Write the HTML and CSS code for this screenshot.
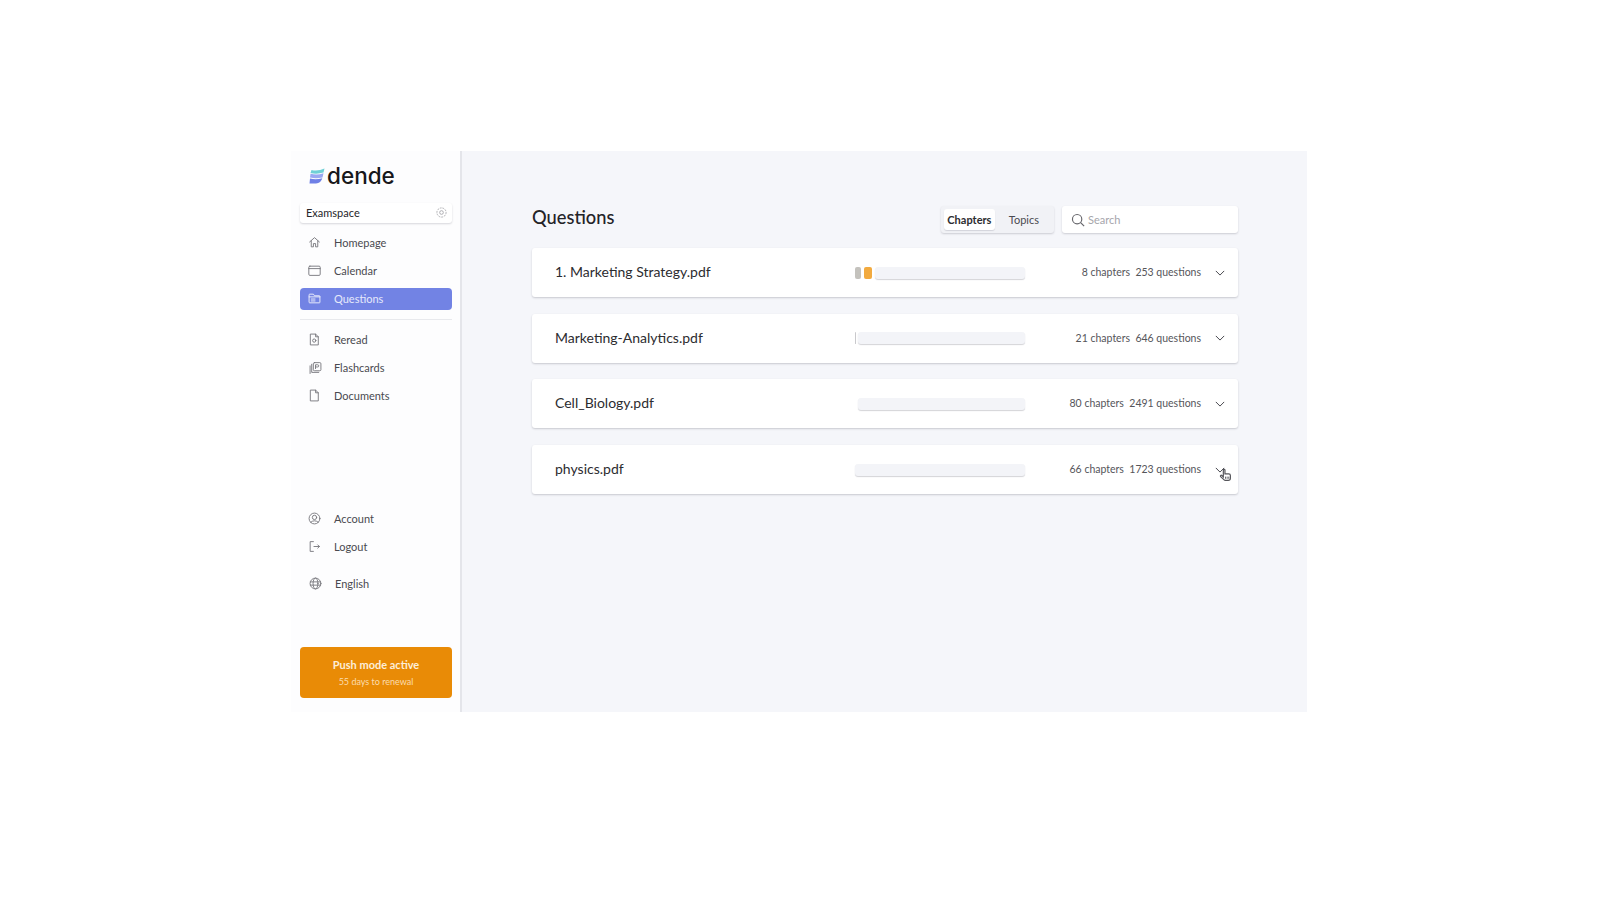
FILE: index.html
```html
<!DOCTYPE html>
<html lang="en">
<head>
    <meta charset="UTF-8">
    <meta name="viewport" content="width=device-width, initial-scale=1.0">
    <title>Questions</title>
    <link rel="stylesheet" href="styles.css">
</head>
<body>
    <div class="app">
        <aside class="sidebar">
            <div class="logo">
                <svg class="logo-mark" viewBox="0 0 16 16" width="16" height="16">
                    <path d="M2.500 2 Q9 3.500 15.500 0.500 L14.500 4.500 Q8 6.500 1.500 5 Z" fill="#6fd0d6"/>
                    <path d="M1.500 5.800 Q8 7.500 14.500 5.300 L13.500 9.500 Q7 11 1 9.500 Z" fill="#9aa8f2"/>
                    <path d="M1 10.500 Q7 12 13.300 10.200 Q12 15 7 15.500 L0.500 15.500 Z" fill="#6f80e6"/>
                </svg>
                <span class="logo-text">dende</span>
            </div>
            <div class="examspace">
                <span>Examspace</span>
                <svg viewBox="0 0 24 24" width="11" height="11" fill="none" stroke="#a9a9ad" stroke-width="2"><circle cx="12" cy="12" r="4"/><circle cx="12" cy="12" r="10" stroke-dasharray="4 2"/></svg>
            </div>
            <nav class="nav-group">
                <a class="nav-item">
                    <svg class="icon" viewBox="0 0 24 24"><path d="M3 11 12 3l9 8M6 9v11h4v-6h4v6h4V9"/></svg>
                    Homepage
                </a>
                <a class="nav-item">
                    <svg class="icon" viewBox="0 0 24 24"><rect x="1.500" y="4" width="21" height="17" rx="2"/><path d="M1.500 8.500h21"/></svg>
                    Calendar
                </a>
                <a class="nav-item active">
                    <svg class="icon" viewBox="0 0 24 24"><path d="M2 5a1 1 0 0 1 1-1h7l2 3h9a1 1 0 0 1 1 1v11a1 1 0 0 1-1 1H3a1 1 0 0 1-1-1z"/><path d="M2 9h20M6 13h7M6 16.500h7"/></svg>
                    Questions
                </a>
            </nav>
            <div class="nav-divider"></div>
            <nav class="nav-group">
                <a class="nav-item">
                    <svg class="icon" viewBox="0 0 24 24"><path d="M5 2h9l5 5v15H5z"/><path d="M14 2v5h5"/><circle cx="11.500" cy="14" r="3"/></svg>
                    Reread
                </a>
                <a class="nav-item">
                    <svg class="icon icon-shift" viewBox="0 0 24 24"><rect x="8" y="3" width="14" height="15" rx="2"/><path d="M5 6v15h13M2 9v14"/><path d="M12 14V7h4a2 2 0 0 1 0 4h-4"/></svg>
                    Flashcards
                </a>
                <a class="nav-item">
                    <svg class="icon" viewBox="0 0 24 24"><path d="M5 2h9l5 5v15H5z"/><path d="M14 2v5h5"/></svg>
                    Documents
                </a>
            </nav>
            <nav class="nav-group nav-bottom">
                <a class="nav-item">
                    <svg class="icon" viewBox="0 0 24 24"><circle cx="12" cy="12" r="10"/><circle cx="12" cy="10" r="4"/><path d="M5 19q7-6 14 0"/></svg>
                    Account
                </a>
                <a class="nav-item">
                    <svg class="icon" viewBox="0 0 24 24"><path d="M10 3H4v18h6M11 12h10M18 9l3 3-3 3"/></svg>
                    Logout
                </a>
                <a class="nav-item lang">
                    <svg class="icon" viewBox="0 0 24 24"><circle cx="12" cy="12" r="10"/><ellipse cx="12" cy="12" rx="4.500" ry="10"/><path d="M2.500 9h19M2.500 15h19"/></svg>
                    English
                </a>
            </nav>
            <div class="push-box">
                <p class="push-title">Push mode active</p>
                <p class="push-sub">55 days to renewal</p>
            </div>
        </aside>

        <main class="content">
            <div class="content-head">
                <h1 class="page-title">Questions</h1>
                <div class="tabs">
                    <span class="tab selected">Chapters</span>
                    <span class="tab">Topics</span>
                </div>
                <div class="search">
                    <svg viewBox="0 0 24 24" width="14" height="14" fill="none" stroke="#66666b" stroke-width="2"><circle cx="10.500" cy="10.500" r="8"/><path d="m16.500 16.500 6 6"/></svg>
                    <span>Search</span>
                </div>
            </div>

            <div class="doc-list">
                <div class="doc">
                    <span class="doc-name">1. Marketing Strategy.pdf</span>
                    <div class="bar bar-first">
                        <span class="seg seg-gray"></span>
                        <span class="seg seg-orange"></span>
                        <span class="track"></span>
                    </div>
                    <span class="doc-meta">8 chapters&nbsp; 253 questions</span>
                    <svg class="chevron" viewBox="0 0 12 7"><path d="M1 1l5 5 5-5"/></svg>
                </div>
                <div class="doc">
                    <span class="doc-name">Marketing-Analytics.pdf</span>
                    <div class="bar">
                        <span class="seg seg-tick"></span>
                        <span class="track"></span>
                    </div>
                    <span class="doc-meta">21 chapters&nbsp; 646 questions</span>
                    <svg class="chevron" viewBox="0 0 12 7"><path d="M1 1l5 5 5-5"/></svg>
                </div>
                <div class="doc">
                    <span class="doc-name">Cell_Biology.pdf</span>
                    <div class="bar bar-third">
                        <span class="track"></span>
                    </div>
                    <span class="doc-meta">80 chapters&nbsp; 2491 questions</span>
                    <svg class="chevron" viewBox="0 0 12 7"><path d="M1 1l5 5 5-5"/></svg>
                </div>
                <div class="doc">
                    <span class="doc-name">physics.pdf</span>
                    <div class="bar bar-fourth">
                        <span class="track"></span>
                    </div>
                    <span class="doc-meta">66 chapters&nbsp; 1723 questions</span>
                    <svg class="chevron" viewBox="0 0 12 7"><path d="M1 1l5 5 5-5"/></svg>
                    <svg class="cursor" viewBox="0 0 24 24" width="13" height="14"><path d="M8 3a1.500 1.500 0 0 1 3 0v7h7a3 3 0 0 1 3 3v5a4 4 0 0 1-4 4h-5a4 4 0 0 1-3-1.500L3 15a1.500 1.500 0 0 1 2.300-2L8 15.500z" fill="#fff" stroke="#55555a" stroke-width="2.200"/><path d="M12 15v4M15 15v4M18 15v4" stroke="#55555a" stroke-width="1.600"/></svg>
                </div>
            </div>
        </main>
    </div>
</body>
</html>
```

FILE: styles.css
```css
*{
    box-sizing: border-box;
}
body{
    margin: 0;
    height: 900px;
    overflow: hidden;
    background-color: #fff;
    font-family: Lato, 'Noto Sans', sans-serif;
    color: #2c2c30;
}
.app{
    display: flex;
    width: 1016px;
    height: 561px;
    margin: 151px 0 0 291px;
    background-color: #f5f6fa;
}
.sidebar{
    display: flex;
    flex-direction: column;
    width: 171px;
    padding: 0 8px 14px 9px;
    background-color: #fdfdfe;
    border-right: 2px solid #e4e5ea;
}
.logo{
    display: flex;
    align-items: center;
    gap: 2px;
    height: 52px;
    padding: 0 0 3px 9px;
}
.logo-text{
    font-family: Inter, Lato, sans-serif;
    font-size: 22.5px;
    font-weight: 500;
    line-height: 25px;
    color: #17171a;
}
.examspace{
    display: flex;
    justify-content: space-between;
    align-items: center;
    height: 20px;
    padding: 0 5px 2px 6px;
    background-color: #fff;
    border-radius: 3px;
    box-shadow: 0 1px 2px rgba(40, 40, 60, 0.18);
    font-size: 11px;
    color: #26262a;
}
.nav-group{
    display: flex;
    flex-direction: column;
    gap: 6px;
}
.sidebar > .nav-group:first-of-type{
    margin-top: 9px;
}
.nav-item{
    display: flex;
    align-items: center;
    gap: 13px;
    height: 22px;
    padding: 0 0 2px 8px;
    border-radius: 4px;
    font-size: 11px;
    color: #4a4a50;
}
.nav-item.active{
    background-color: #7283e4;
    color: #e6e9fb;
}
.icon{
    width: 13px;
    height: 13px;
    flex-shrink: 0;
    fill: none;
    stroke: #77777c;
    stroke-width: 1.700;
    stroke-linejoin: round;
    stroke-linecap: round;
}
.icon-shift{
    margin-left: 1px;
    margin-right: -1px;
}
.active .icon{
    stroke: #f0f2fd;
}
.nav-divider{
    height: 1px;
    margin: 9px 0 9px 0;
    background-color: #e8e9ed;
}
.nav-bottom{
    margin-top: auto;
}
.lang{
    margin-top: 9px;
    padding-left: 9px;
}
.push-box{
    display: flex;
    flex-direction: column;
    align-items: center;
    justify-content: center;
    gap: 5px;
    height: 51px;
    margin-top: 52px;
    background-color: #e98b06;
    border-radius: 4px;
    color: #fff;
}
.push-box p{
    margin: 0;
}
.push-title{
    font-size: 11px;
    font-weight: 700;
    color: #fdeed8;
}
.push-sub{
    font-size: 9px;
    color: #fbdcae;
}
.content{
    flex: 1;
    padding: 55px 69px 0 70px;
}
.content-head{
    display: flex;
    align-items: center;
    height: 27px;
    margin-bottom: 15px;
}
.page-title{
    flex: 1;
    margin: 0;
    padding-bottom: 5px;
    font-size: 18.3px;
    font-weight: 500;
    color: #232327;
}
.tabs{
    display: flex;
    align-items: center;
    width: 113px;
    height: 27px;
    padding: 0 3px;
    margin-right: 8px;
    background-color: #f1f2f6;
    border-radius: 3px;
    box-shadow: 0 1px 2px rgba(40, 40, 60, 0.2);
}
.tab{
    padding: 0 12px 0 14px;
    font-size: 11px;
    color: #4a4a50;
}
.tab.selected{
    display: flex;
    align-items: center;
    width: 54px;
    height: 21px;
    padding: 0;
    justify-content: center;
    background-color: #fff;
    border-radius: 3px;
    box-shadow: 0 1px 1px rgba(40, 40, 60, 0.15);
    font-weight: 700;
    color: #2c2c30;
}
.search{
    display: flex;
    align-items: center;
    gap: 3px;
    width: 176px;
    height: 27px;
    padding-left: 9px;
    background-color: #fff;
    border-radius: 3px;
    box-shadow: 0 1px 2px rgba(40, 40, 60, 0.2);
    font-size: 11px;
    color: #a6a6ab;
}
.doc-list{
    display: flex;
    flex-direction: column;
    gap: 16.700px;
}
.doc{
    position: relative;
    display: flex;
    align-items: center;
    height: 49px;
    padding: 0 13px 0 23px;
    background-color: #fff;
    border-radius: 3px;
    box-shadow: 0 1px 2px rgba(40, 40, 60, 0.22);
}
.doc-name{
    width: 300px;
    padding-bottom: 2px;
    font-size: 14px;
    color: #2c2c30;
}
.bar{
    display: flex;
    align-items: center;
    gap: 3px;
    width: 170px;
    height: 12px;
}
.bar-third{
    padding-left: 3px;
}
.track{
    flex: 1;
    height: 12px;
    background-color: #f3f4f8;
    border-radius: 3px;
    box-shadow: 0 1px 1px rgba(40, 40, 60, 0.2);
}
.seg{
    height: 12px;
    border-radius: 2px;
}
.seg-gray{
    width: 6px;
    background-color: #c4c2bd;
}
.seg-orange{
    width: 8px;
    background-color: #f2aa3f;
}
.seg-tick{
    width: 1px;
    margin-right: -1px;
    background-color: #c9c9cc;
}
.doc-meta{
    flex: 1;
    padding-bottom: 1px;
    text-align: right;
    font-size: 10.500px;
    color: #55555a;
}
.chevron{
    width: 10px;
    height: 6px;
    margin-left: 14px;
    fill: none;
    stroke: #4a4a50;
    stroke-width: 1.200;
}
.cursor{
    position: absolute;
    right: 6px;
    top: 23px;
}
```
